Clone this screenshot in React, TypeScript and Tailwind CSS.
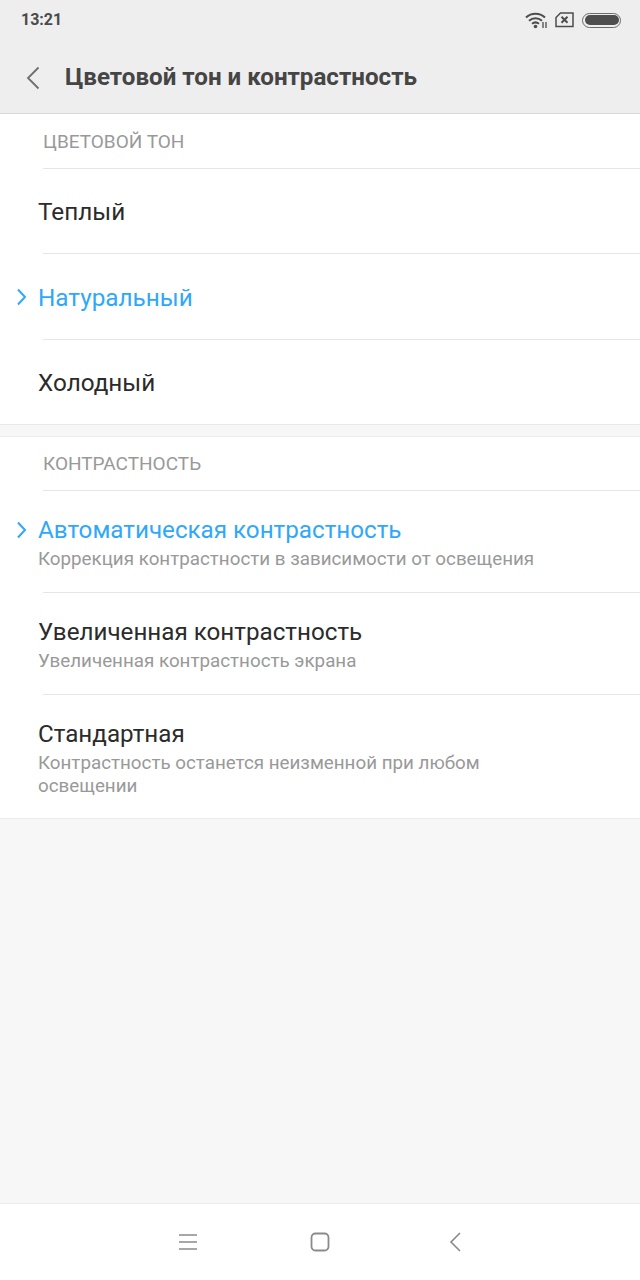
const font = "font-['Roboto',sans-serif]";

function Chevron() {
  return (
    <svg aria-hidden width="12" height="18" viewBox="0 0 12 18" fill="none" className="absolute left-[15px] top-1/2 -translate-y-1/2">
      <path d="M3 1.500 10 9l-7 7.500" stroke="#2fa8fb" strokeWidth="2" />
    </svg>
  );
}

function SectionLabel({ children, height }: { children: string; height: string }) {
  return (
    <div className={`ml-[43px] flex items-center border-b border-[#e6e6e6] pt-[2px] text-[19px] text-[#999999] ${height}`}>
      {children}
    </div>
  );
}

function ToneRow({ title, height, pad, active, last }: { title: string; height: string; pad: string; active?: boolean; last?: boolean }) {
  return (
    <div className={`relative ${height}`}>
      {active && <Chevron />}
      <div className={`flex h-full items-center pl-[38px] text-[24.3px] ${pad} ${active ? "text-[#2fa8fb]" : "text-[#2b2b2b]"}`}>
        {title}
      </div>
      {!last && <div className="absolute bottom-0 left-[43px] right-0 h-px bg-[#e6e6e6]" />}
    </div>
  );
}

function ContrastRow({ title, sub, active, last }: { title: string; sub: string; active?: boolean; last?: boolean }) {
  return (
    <div className={`relative pl-[38px] pr-[100px] pt-[24px] ${last ? "h-[123px]" : "h-[102px]"}`}>
      {active && <div className="absolute left-0 top-[39px] h-0 w-0"><Chevron /></div>}
      <div className={`text-[24.2px] leading-[30px] ${active ? "text-[#2fa8fb]" : "text-[#2b2b2b]"}`}>{title}</div>
      <div className="mt-[3px] text-[18.8px] leading-[23px] text-[#999999]">{sub}</div>
      {!last && <div className="absolute bottom-0 left-[43px] right-0 h-px bg-[#e6e6e6]" />}
    </div>
  );
}

export default function App() {
  return (
    <div className={`${font} flex h-[1280px] w-[640px] flex-col overflow-hidden bg-[#f7f7f7]`}>
      {/* status bar + title */}
      <div className="h-[114px] border-b border-[#d9d9d9] bg-[#eeeeee]">
        <div className="flex h-[40px] items-center justify-between pl-[21px] pr-[19px]">
          <span className="text-[16px] font-bold text-[#4a4a4a]">13:21</span>
          <div className="flex items-center gap-[7px]">
            <svg width="23" height="18" viewBox="0 0 23 18" fill="none">
              <path d="M1 6.500C6.500 1.500 14.500 1.500 20 6.500" stroke="#4d4d4d" strokeWidth="2" />
              <path d="M4 9.800C7.800 6.500 13.200 6.500 17 9.800" stroke="#4d4d4d" strokeWidth="2" />
              <path d="M7 12.800C9 11.200 12 11.200 14 12.800" stroke="#4d4d4d" strokeWidth="2" />
              <circle cx="10.500" cy="15.500" r="1.800" fill="#4d4d4d" />
              <path d="M18 11v6M21 11v6" stroke="#4d4d4d" strokeWidth="1.300" />
            </svg>
            <svg width="19" height="16" viewBox="0 0 19 16" fill="none" className="mr-px">
              <path d="M5.500 1H18v13.500H1V5.500Z" stroke="#4d4d4d" strokeWidth="1.500" />
              <path d="M6.500 4.800 12.500 10.800M12.500 4.800 6.500 10.800" stroke="#4d4d4d" strokeWidth="2" />
            </svg>
            <div className="flex h-[15px] w-[39px] items-center rounded-full border border-[#6a6a6a] p-[1.500px]">
              <div className="h-full w-full rounded-full bg-[#4d4d4d]" />
            </div>
          </div>
        </div>
        <div className="flex h-[73px] items-center pt-[2px]">
          <svg width="16" height="24" viewBox="0 0 16 24" fill="none" className="ml-[25px]">
            <path d="M13.500 1.500 3 12l10.500 10.500" stroke="#6e6e6e" strokeWidth="1.800" />
          </svg>
          <h1 className="ml-[24px] text-[24.15px] font-bold text-[#454545]">Цветовой тон и контрастность</h1>
        </div>
      </div>

      <section className="border-b border-[#e8e8e8] bg-white">
        <SectionLabel height="h-[55px]">ЦВЕТОВОЙ ТОН</SectionLabel>
        <ToneRow title="Теплый" height="h-[85px]" pad="pt-[1px]" />
        <ToneRow title="Натуральный" height="h-[86px]" pad="pt-[3px]" active />
        <ToneRow title="Холодный" height="h-[84px]" pad="pt-[3px]" last />
      </section>

      <section className="mt-[11px] border-y border-[#ececec] bg-white">
        <SectionLabel height="h-[54px]">КОНТРАСТНОСТЬ</SectionLabel>
        <ContrastRow title="Автоматическая контрастность" sub="Коррекция контрастности в зависимости от освещения" active />
        <ContrastRow title="Увеличенная контрастность" sub="Увеличенная контрастность экрана" />
        <ContrastRow title="Стандартная" sub="Контрастность останется неизменной при любом освещении" last />
      </section>

      {/* system nav */}
      <div className="mt-auto flex h-[77px] items-center border-t border-[#ececec] bg-white pl-[178px]">
        <svg width="20" height="18" viewBox="0 0 20 18" fill="none">
          <path d="M1 2h18M1 9h18M1 16h18" stroke="#8a8a8a" strokeWidth="1.500" />
        </svg>
        <svg width="20" height="20" viewBox="0 0 20 20" fill="none" className="ml-[112px]">
          <rect x="1.500" y="1.500" width="17" height="17" rx="4" stroke="#8a8a8a" strokeWidth="1.800" />
        </svg>
        <svg width="12" height="20" viewBox="0 0 12 20" fill="none" className="ml-[119px]">
          <path d="M11 1 2 10l9 9" stroke="#8a8a8a" strokeWidth="1.600" />
        </svg>
      </div>
    </div>
  );
}
